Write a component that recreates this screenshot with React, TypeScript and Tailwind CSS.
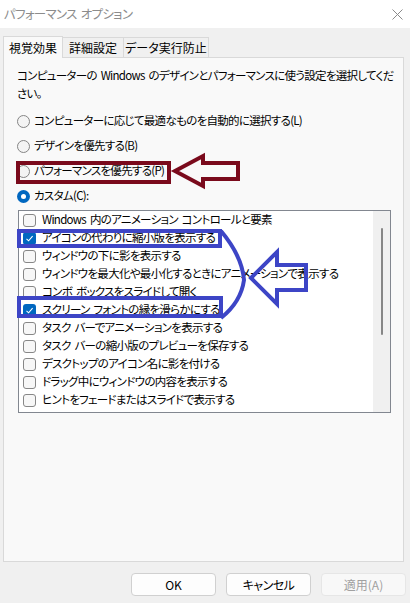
import React from "react";

const font = "[font-family:'Noto_Sans_CJK_JP',sans-serif] [font-feature-settings:'palt']";

const effects: { label: string; checked: boolean }[] = [
  { label: "Windows 内のアニメーション コントロールと要素", checked: false },
  { label: "アイコンの代わりに縮小版を表示する", checked: true },
  { label: "ウィンドウの下に影を表示する", checked: false },
  { label: "ウィンドウを最大化や最小化するときにアニメーションで表示する", checked: false },
  { label: "コンボ ボックスをスライドして開く", checked: false },
  { label: "スクリーン フォントの縁を滑らかにする", checked: true },
  { label: "タスク バーでアニメーションを表示する", checked: false },
  { label: "タスク バーの縮小版のプレビューを保存する", checked: false },
  { label: "デスクトップのアイコン名に影を付ける", checked: false },
  { label: "ドラッグ中にウィンドウの内容を表示する", checked: false },
  { label: "ヒントをフェードまたはスライドで表示する", checked: false },
];

const radios = [
  { label: "コンピューターに応じて最適なものを自動的に選択する(L)", on: false },
  { label: "デザインを優先する(B)", on: false },
  { label: "パフォーマンスを優先する(P)", on: false },
  { label: "カスタム(C):", on: true },
];

function Radio({ on }: { on: boolean }) {
  if (on) {
    return (
      <span className="flex h-[13px] w-[13px] shrink-0 items-center justify-center rounded-full bg-[#0067c0]">
        <span className="h-[5px] w-[5px] rounded-full bg-white" />
      </span>
    );
  }
  return <span className="h-[13px] w-[13px] shrink-0 rounded-full border border-[#858585] bg-[#f4f4f4]" />;
}

function Check({ on }: { on: boolean }) {
  if (on) {
    return (
      <span className="flex h-[13px] w-[13px] shrink-0 items-center justify-center rounded-[3px] bg-[#0067c0]">
        <svg width="9" height="9" viewBox="0 0 9 9">
          <polyline points="1.5,4.8 3.6,6.8 7.6,2.2" fill="none" stroke="white" strokeWidth="1.1" />
        </svg>
      </span>
    );
  }
  return <span className="h-[13px] w-[13px] shrink-0 rounded-[3px] border border-[#878787] bg-[#f7f7f7]" />;
}

export default function App() {
  return (
    <div className={`relative flex h-[603px] w-[410px] flex-col overflow-hidden bg-[#f0f0f0] text-[11.5px] tracking-[-0.7px] [word-spacing:2px] text-black ${font}`}>
      {/* title bar */}
      <div className="flex h-[28px] shrink-0 items-center justify-between bg-white pl-[4px] pr-[7px]">
        <span className="text-[12.5px] text-[#8c8c8c]">パフォーマンス オプション</span>
        <svg width="11" height="11" viewBox="0 0 11 11">
          <path d="M0.5 0.5 L10.5 10.5 M10.5 0.5 L0.5 10.5" stroke="#8a8a8a" strokeWidth="1" />
        </svg>
      </div>

      {/* tabs */}
      <div className="mt-[8px] flex h-[21px] items-end pl-[3px] text-[12px] tracking-normal">
        <div className="relative z-10 -mb-px flex h-[22px] w-[60px] items-center justify-center border border-b-0 border-[#d9d9d9] bg-[#f9f9f9]">
          視覚効果
        </div>
        <div className="-ml-px flex h-[20px] w-[62px] items-center justify-center border border-b-0 border-[#d9d9d9] bg-[#f0f0f0]">
          詳細設定
        </div>
        <div className="-ml-px flex h-[20px] w-[86px] items-center justify-center border border-b-0 border-[#d9d9d9] bg-[#f0f0f0]">
          データ実行防止
        </div>
      </div>

      {/* panel */}
      <div className="mx-[3px] mr-[6px] flex h-[505px] flex-col border border-[#d9d9d9] bg-[#f9f9f9] pl-[13px] pt-[8px]">
        <p className="whitespace-nowrap leading-[18px]">
          コンピューターの Windows のデザインとパフォーマンスに使う設定を選択してくだ
          <br />
          さい。
        </p>

        <div className="mt-[10px] flex flex-col gap-[7px]">
          {radios.map((r) => (
            <div key={r.label} className="flex h-[18px] items-center gap-[4px]">
              <Radio on={r.on} />
              <span>{r.label}</span>
            </div>
          ))}
        </div>

        <div className="ml-px mt-[5px] flex h-[203px] w-[373px] border border-[#828790] bg-white">
          <div className="flex flex-1 flex-col overflow-hidden">
            {effects.map((e) => (
              <div key={e.label} className="flex h-[18px] shrink-0 items-center gap-[6px] whitespace-nowrap pl-[4px]">
                <Check on={e.checked} />
                <span>{e.label}</span>
              </div>
            ))}
          </div>
          <div className="flex w-[17px] shrink-0 justify-center bg-[#f0f0f0] pt-[17px]">
            <div className="h-[107px] w-[2px] rounded-full bg-[#868686]" />
          </div>
        </div>
      </div>

      {/* buttons */}
      <div className="mt-[11px] flex justify-end gap-[10px] pr-[4px] text-[12px] tracking-normal">
        <button className="h-[23px] w-[85px] rounded-[4px] border border-[#d0d0d0] bg-[#fdfdfd]">OK</button>
        <button className="h-[23px] w-[85px] rounded-[4px] border border-[#d0d0d0] bg-[#fdfdfd] tracking-[-0.5px]">キャンセル</button>
        <button className="h-[23px] w-[85px] rounded-[4px] border border-[#e6e6e6] bg-[#f8f8f8] text-[#a0a0a0]">適用(A)</button>
      </div>

      {/* annotations drawn over the dialog */}
      <svg className="pointer-events-none absolute left-0 top-0" width="410" height="603" viewBox="0 0 410 603">
        <g fill="none" stroke="#7a0a1c" strokeWidth="4" strokeLinejoin="miter">
          <rect x="18" y="163" width="151" height="19" />
          <polygon points="175,171 203,156 203,163 238,163 238,179 203,179 203,186" />
        </g>
        <g fill="none" stroke="#3d45c6" strokeWidth="4" strokeLinejoin="miter">
          <rect x="19" y="231" width="201" height="15" />
          <rect x="19" y="298" width="202" height="18" />
          <path d="M221 231 Q 242 256 244 280 Q 241 302 221 318" />
          <polygon points="251,278 277,252 277,265 306,265 306,290 277,290 277,304" />
        </g>
      </svg>
    </div>
  );
}
